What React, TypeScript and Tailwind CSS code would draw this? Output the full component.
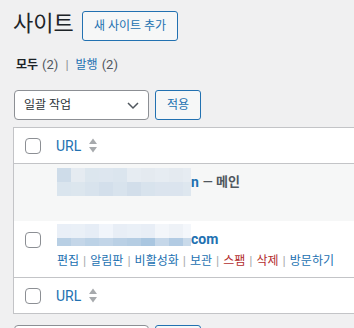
import React from 'react';

const topCells1 = ['bg-[#cedce9]', 'bg-[#e5ebf1]', 'bg-[#dce6ee]', 'bg-[#dde6ef]', 'bg-[#dbe5ee]', 'bg-[#e6ecf2]', 'bg-[#e4eaf0]', 'bg-[#e6ecf2]', 'bg-[#e4eaf0]', 'bg-[#e6ecf2]'];
const botCells1 = ['bg-[#dae5ee]', 'bg-[#dce6ee]', 'bg-[#d8e3ed]', 'bg-[#d3dfeb]', 'bg-[#d8e3ed]', 'bg-[#d2deea]', 'bg-[#d8e3ed]', 'bg-[#dbe4ee]', 'bg-[#dbe4ee]', 'bg-[#dee7ef]'];
const topCells2 = ['bg-[#e9eff7]', 'bg-[#eaf0f7]', 'bg-[#e6edf6]', 'bg-[#f1f5fb]', 'bg-[#e8eef6]', 'bg-[#eaf0f7]', 'bg-[#e8eef6]', 'bg-[#f3f6fa]', 'bg-[#eef2f7]', 'bg-[#f4f7fb]'];
const botCells2 = ['bg-[#b8cfe4]', 'bg-[#c4d6e8]', 'bg-[#bcd2e6]', 'bg-[#c2d5e8]', 'bg-[#bad0e5]', 'bg-[#b5cde3]', 'bg-[#a9c6e0]', 'bg-[#c5d7e9]', 'bg-[#b2cbe3]', 'bg-[#c9daea]'];

const Checkbox = () => (
  <div className="w-4 h-4 border border-[#8c8f94] rounded-[4px] bg-white" />
);

const SortIcon = () => (
  <svg width="8" height="15" viewBox="0 0 8 15" className="ml-[8px]">
    <path d="M0 6 L4 0.5 L8 6 Z" fill="#a7aaad" />
    <path d="M0 9 L4 14.5 L8 9 Z" fill="#a7aaad" />
  </svg>
);

const Pixels: React.FC<{ rows: string[][]; heights: string[] }> = ({ rows, heights }) => (
  <div className="w-[134px] overflow-hidden shrink-0">
    {rows.map((row, i) => (
      <div key={i} className={`flex ${heights[i]}`}>
        {row.map((c, j) => (
          <div key={j} className={`w-[14px] shrink-0 ${c}`} />
        ))}
      </div>
    ))}
  </div>
);

const actions = [
  { label: '편집', red: false },
  { label: '알림판', red: false },
  { label: '비활성화', red: false },
  { label: '보관', red: false },
  { label: '스팸', red: true },
  { label: '삭제', red: true },
  { label: '방문하기', red: false },
];

export default function App() {
  return (
    <div className="w-[354px] h-[328px] overflow-hidden bg-[#f0f0f1] pl-[13px] font-['Roboto','Noto_Sans_CJK_KR',sans-serif] text-[#3c434a]">
      {/* heading */}
      <div className="flex items-center mt-[11px] h-[30px]">
        <h1 className="text-[22px] leading-[30px] text-[#1d2327] -mt-[4px] w-[69px]">사이트</h1>
        <div className="w-[96px] h-[30px] border border-[#2271b1] rounded-[3px] bg-[#f6f7f7] text-[#2271b1] text-[12px] flex items-center justify-center">
          새 사이트 추가
        </div>
      </div>

      {/* filter */}
      <div className="flex items-center mt-[14px] h-[20px] pl-[3px] text-[13px]">
        <span className="font-bold text-[12px] text-[#1d2327]">모두</span>
        <span className="ml-[4px] text-[#50575e]">(2)</span>
        <span className="mx-[7px] text-[#8c8f94]">|</span>
        <span className="text-[12px] text-[#2271b1]">발행</span>
        <span className="ml-[4px] text-[#50575e]">(2)</span>
      </div>

      {/* bulk actions */}
      <div className="flex items-center mt-[15px] pl-[1px] gap-[6px]">
        <div className="w-[135px] h-[30px] border border-[#8c8f94] rounded-[4px] bg-white flex items-center justify-between pl-[9px] pr-[8px]">
          <span className="text-[12px] text-[#2c3338]">일괄 작업</span>
          <svg width="14" height="14" viewBox="0 0 14 14">
            <path d="M2 5 L7 10 L12 5" fill="none" stroke="#50575e" strokeWidth="1.5" />
          </svg>
        </div>
        <div className="w-[46px] h-[30px] border border-[#2271b1] rounded-[3px] bg-[#f6f7f7] text-[#2271b1] text-[12px] flex items-center justify-center">
          적용
        </div>
      </div>

      {/* table */}
      <div className="mt-[7px] w-[420px] border border-[#c3c4c7] bg-white">
        <div className="h-[36px] flex items-center border-b border-[#c3c4c7]">
          <div className="w-[42px] pl-[11px]">
            <Checkbox />
          </div>
          <span className="text-[14px] text-[#2271b1] leading-none">URL</span>
          <SortIcon />
        </div>

        <div className="h-[57px] bg-[#f6f7f7] pl-[43px] pt-[4px]">
          <div className="flex items-center">
            <Pixels rows={[topCells1, botCells1]} heights={['h-[14px]', 'h-[14px]']} />
            <span className="text-[14px] font-bold text-[#2271b1]">n</span>
            <span className="text-[13px] font-semibold text-[#50575e] ml-[4px]">— 메인</span>
          </div>
        </div>

        <div className="h-[57px] flex border-b border-[#c3c4c7]">
          <div className="w-[43px] pl-[11px] pt-[11px] shrink-0">
            <Checkbox />
          </div>
          <div className="pt-[3px]">
            <div className="flex items-start">
              <Pixels rows={[topCells2, botCells2]} heights={['h-[14px]', 'h-[8px]']} />
              <span className="text-[14px] font-bold text-[#2271b1] leading-[20px] mt-[5px]">com</span>
            </div>
            <div className="flex items-center mt-[2px] h-[20px] text-[12px] whitespace-nowrap">
              {actions.map((a, i) => (
                <React.Fragment key={a.label}>
                  {i > 0 && <span className="mx-[4px] text-[#a7aaad] text-[13px]">|</span>}
                  <span className={a.red ? 'text-[#b32d2e]' : 'text-[#2271b1]'}>{a.label}</span>
                </React.Fragment>
              ))}
            </div>
          </div>
        </div>

        <div className="h-[35px] flex items-center">
          <div className="w-[42px] pl-[11px]">
            <Checkbox />
          </div>
          <span className="text-[14px] text-[#2271b1] leading-none">URL</span>
          <SortIcon />
        </div>
      </div>

      {/* bottom bulk actions */}
      <div className="flex items-center mt-[11px] pl-[1px] gap-[6px]">
        <div className="w-[135px] h-[30px] border border-[#8c8f94] rounded-[4px] bg-white" />
        <div className="w-[46px] h-[30px] border border-[#2271b1] rounded-[3px] bg-[#f6f7f7]" />
      </div>
    </div>
  );
}
